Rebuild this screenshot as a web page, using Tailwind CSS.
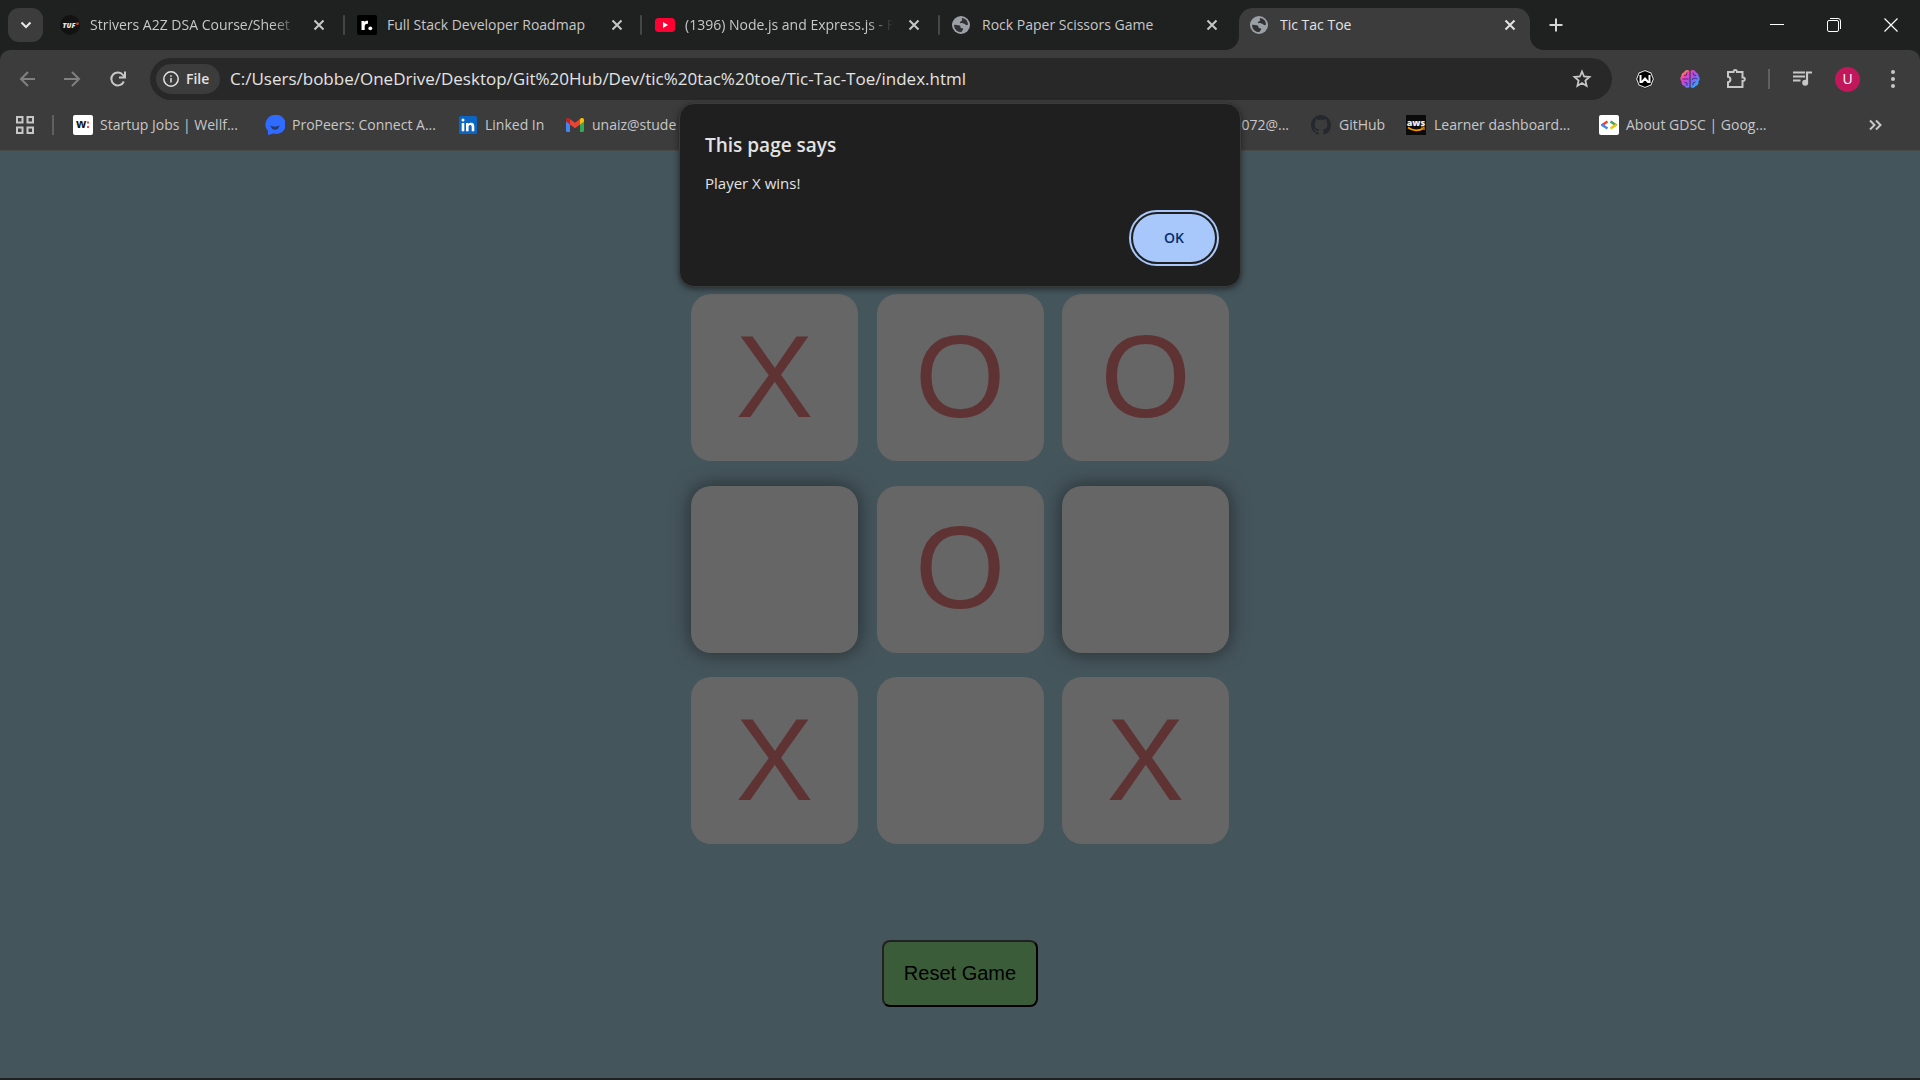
<!DOCTYPE html>
<html lang="en">
<head>
<meta charset="utf-8">
<title>Tic Tac Toe</title>
<script src="https://cdn.jsdelivr.net/npm/@tailwindcss/browser@4"></script>
</head>
<body class="min-h-screen flex flex-col bg-[#1f2020] font-['Open_Sans',sans-serif] text-[#c7c7c7] text-sm">
<svg class="hidden">
  <symbol id="x" viewBox="0 0 16 16"><path d="M3.500 3.500l9 9M12.500 3.500l-9 9" stroke="currentColor" stroke-width="2" fill="none"/></symbol>
  <symbol id="globe" viewBox="0 0 18 18"><circle cx="9" cy="9" r="9" fill="#9aa0a6"/><path d="M10 2a7 7 0 0 1 6 6.500c-1 .8-1.500.8-2.300.3-.7-.5-.8-1.300-2.300-1.300-1.200 0-1.400-.6-2.600-.4-.9.200-1.300-.5-.7-1.200.7-.8 1.700-.3 1.900-1.400.2-.9-.5-1.600 0-2.500z" fill="#303132"/><path d="M2 9c1.800-.6 3 .2 4.300.2 1.600 0 2.400.9 2.200 2-.1 1 .9.900 1.800 1 1.300.2 1 1.500.3 2.100-.8.6-.4 1.200-1.100 1.700A7 7 0 0 1 2 9z" fill="#303132"/></symbol>
</svg>

<!-- Tab strip -->
<header class="flex h-[50px] items-center pl-2 pr-[22px]">
  <button aria-label="Search tabs" class="flex h-[34px] w-[35px] shrink-0 items-center justify-center rounded-[11px] bg-[#3c3c3c]">
    <svg width="12" height="8" viewBox="0 0 12 8"><path d="M1.500 1.500L6 6l4.500-4.500" stroke="#e8e8e8" stroke-width="2" fill="none"/></svg>
  </button>
  <nav class="ml-1.5 flex h-full min-w-0 items-center">
    <div class="relative flex w-[298px] items-center pl-[11px]">
      <svg class="shrink-0" width="20" height="20" viewBox="0 0 20 20"><circle cx="10" cy="10" r="10" fill="#121212"/><text x="9" y="12.500" font-family="Open Sans" font-size="7" font-weight="800" font-style="italic" fill="#e8e8e8" text-anchor="middle">TUF</text><path d="M16.500 7.500H19l-.5 2.500h-2.300z" fill="#b5452f"/></svg>
      <a href="#" class="ml-2.5 w-[208px] overflow-hidden whitespace-nowrap [mask-image:linear-gradient(to_right,#000_88%,transparent)]">Strivers A2Z DSA Course/Sheet</a>
      <button aria-label="Close tab" class="ml-[13px]"><svg width="16" height="16"><use href="#x"/></svg></button>
      <span class="absolute right-0.5 h-5 w-0.5 rounded bg-[#444746]"></span>
    </div>
    <div class="relative flex w-[297px] items-center pl-2.5">
      <svg class="shrink-0" width="20" height="20" viewBox="0 0 20 20"><rect width="20" height="20" rx="2" fill="#000"/><path d="M4.500 15V6h3v1.200C8.300 6 9.400 5.600 11 5.800v3C8.700 8.600 7.700 9.500 7.700 11.300V15z" fill="#fff"/><circle cx="13.300" cy="13.300" r="1.900" fill="#fff"/></svg>
      <a href="#" class="ml-2.5 w-[208px] overflow-hidden whitespace-nowrap">Full Stack Developer Roadmap</a>
      <button aria-label="Close tab" class="ml-3.5"><svg width="16" height="16"><use href="#x"/></svg></button>
      <span class="absolute right-0.5 h-5 w-0.5 rounded bg-[#444746]"></span>
    </div>
    <div class="relative flex w-[298px] items-center pl-[11px]">
      <svg class="shrink-0" width="20" height="20" viewBox="0 0 20 20"><rect y="3" width="20" height="14" rx="3.500" fill="#ff0033"/><path d="M8 7l5 3-5 3z" fill="#fff"/></svg>
      <a href="#" class="ml-2.5 w-[208px] overflow-hidden whitespace-nowrap [mask-image:linear-gradient(to_right,#000_88%,transparent)]">(1396) Node.js and Express.js - F</a>
      <button aria-label="Close tab" class="ml-[13px]"><svg width="16" height="16"><use href="#x"/></svg></button>
      <span class="absolute right-0.5 h-5 w-0.5 rounded bg-[#444746]"></span>
    </div>
    <div class="flex w-[297px] items-center pl-2.5">
      <svg class="mr-0.5 shrink-0" width="18" height="18"><use href="#globe"/></svg>
      <a href="#" class="ml-2.5 w-[208px] overflow-hidden whitespace-nowrap">Rock Paper Scissors Game</a>
      <button aria-label="Close tab" class="ml-3.5"><svg width="16" height="16"><use href="#x"/></svg></button>
    </div>
    <div class="relative flex h-[42px] w-[291px] items-center self-end rounded-t-[14px] bg-[#3c3c3c] pb-2 pl-[11px] text-[#e3e3e3]">
      <svg class="absolute bottom-0 right-full" width="14" height="14"><path d="M14 0v14H0A14 14 0 0 0 14 0z" fill="#3c3c3c"/></svg>
      <svg class="absolute bottom-0 left-full" width="14" height="14"><path d="M0 0v14h14A14 14 0 0 1 0 0z" fill="#3c3c3c"/></svg>
      <svg class="mr-0.5 shrink-0" width="18" height="18"><use href="#globe"/></svg>
      <a href="#" class="ml-2.5 w-[208px] overflow-hidden whitespace-nowrap">Tic Tac Toe</a>
      <button aria-label="Close tab" class="ml-3.5"><svg width="16" height="16"><use href="#x"/></svg></button>
    </div>
    <button aria-label="New tab" class="ml-[18px]"><svg width="16" height="16"><path d="M8 1.500v13M1.500 8h13" stroke="#d5d5d5" stroke-width="2"/></svg></button>
  </nav>
  <div class="ml-auto flex items-center gap-[43px] text-white">
    <button aria-label="Minimize"><svg width="14" height="14"><path d="M0 6.500h14" stroke="currentColor"/></svg></button>
    <button aria-label="Restore"><svg width="14" height="14" fill="none" stroke="currentColor"><rect x=".5" y="2.500" width="11" height="11" rx="1.500"/><path d="M3 .5h8a2.500 2.500 0 0 1 2.500 2.500v8"/></svg></button>
    <button aria-label="Close"><svg width="14" height="14"><path d="M.5.5l13 13M13.500.5l-13 13" stroke="currentColor" stroke-width="1.200"/></svg></button>
  </div>
</header>

<!-- Toolbar and bookmarks -->
<section class="h-[101px] rounded-t-[10px] border-b border-[#4a4c4c] bg-[#3c3c3c] pt-2">
  <div class="flex h-[42px] items-center pr-[17px]">
    <div class="flex w-[150px] shrink-0 items-center gap-[25px] pl-[18px]">
      <button aria-label="Back"><svg width="20" height="20" fill="none" stroke="#808080" stroke-width="2"><path d="M17 10H3.500M10 3l-7 7 7 7"/></svg></button>
      <button aria-label="Forward"><svg width="20" height="20" fill="none" stroke="#808080" stroke-width="2"><path d="M1 10h14.500M9 3l7 7-7 7"/></svg></button>
      <button aria-label="Reload"><svg width="20" height="20" fill="none" stroke="#c7c7c7" stroke-width="2"><path d="M15.800 12.500a6.500 6.500 0 1 1-.8-6.500l1.500 2M17 2.500v6h-6"/></svg></button>
    </div>
    <div class="flex h-full min-w-0 flex-1 items-center rounded-full bg-[#282828] pl-1.5 pr-5">
      <button class="flex h-[30px] w-16 shrink-0 items-center gap-[7px] rounded-full bg-[#3c3c3c] pl-[7px] text-sm font-semibold text-[#e3e3e3]">
        <svg width="16" height="16" fill="none" stroke="currentColor" stroke-width="1.500"><circle cx="8" cy="8" r="7.200"/><path d="M8 7v4.500M8 4.200v1.600"/></svg>File</button>
      <input aria-label="Address" type="text" value="C:/Users/bobbe/OneDrive/Desktop/Git%20Hub/Dev/tic%20tac%20toe/Tic-Tac-Toe/index.html" class="ml-2.5 min-w-0 flex-1 bg-transparent text-[17px] text-[#e3e3e3] outline-none">
      <button aria-label="Bookmark this page"><svg width="20" height="20" fill="none" stroke="#c7c7c7" stroke-width="1.800"><path d="M10 2.500l2.100 5 5.400.5-4.100 3.600 1.200 5.300-4.600-2.800-4.600 2.800 1.200-5.300L2.500 8l5.400-.5z"/></svg></button>
    </div>
    <div class="ml-[23px] flex shrink-0 items-center">
      <button aria-label="Extension W"><svg width="20" height="20" viewBox="0 0 20 20"><path d="M10 .5l6.500 2.700L19.300 10l-2.800 6.700L10 19.500l-6.500-2.800L.7 10l2.800-6.800z" fill="#000"/><path d="M10 1.500l6 2.500 2.400 6L16 16l-6 2.500L4 16l-2.400-6L4 4z" fill="none" stroke="#ddd" stroke-width="1.100"/><path d="M5.500 6v7h1.500l3-3.500 3 3.500h1.500V6" fill="none" stroke="#fff" stroke-width="2"/></svg></button>
      <button aria-label="Brain extension" class="ml-[25px]"><svg width="20" height="20" viewBox="0 0 20 20"><defs><linearGradient id="br" x1="0" y1="0" x2="1" y2="1"><stop offset=".1" stop-color="#ff9a3c"/><stop offset=".3" stop-color="#f23cc0"/><stop offset=".58" stop-color="#8b5cf6"/><stop offset=".9" stop-color="#22b8ff"/></linearGradient></defs><path d="M9.400 2v16c-1.800 1.600-4.300.8-4.800-1C2.200 16.600 1 14.500 1.600 12.500 0 11 0 8.500 1.400 7.300 1.200 5 2.500 3.600 4 3.400 4.800.8 8.400.2 9.400 2zM10.600 2v16c1.800 1.600 4.300.8 4.800-1 2.400-.4 3.600-2.500 3-4.500 1.600-1.500 1.600-4 .2-5.200.2-2.300-1.100-3.700-2.600-3.900-.8-2.600-4.400-3.200-5.400-1.400z" fill="url(#br)"/><path d="M2.500 10h6M7 3.500L6.500 6l-2.500.5M7 16.500V14l-2.500-1M12 10.500l3-1.500 2.500 1M13 3.500L13.500 6l2.500.5M13 16.500V14l2.500-1" stroke="#3b2a6b" stroke-width=".9" fill="none"/></svg></button>
      <button aria-label="Extensions" class="ml-[25px]"><svg width="22" height="22" fill="none" stroke="#c7c7c7" stroke-width="2"><path d="M3 4h5.500V3.500a1.800 1.800 0 0 1 3.500 0V4h5.500v5.500h.5a1.800 1.800 0 0 1 0 3.600h-.5V19H3v-4.800c3.200-.6 3.200-4.800 0-5.400z"/></svg></button>
      <span class="ml-[21px] h-5 w-0.5 bg-[#5f6060]"></span>
      <button aria-label="Media controls" class="ml-[23px]"><svg width="20" height="20" viewBox="0 0 20 20"><path d="M0 3.500h12M0 7.500h12M0 11.500h7.500" stroke="#c7c7c7" stroke-width="2"/><path d="M14 13.500V3.500h5" stroke="#c7c7c7" stroke-width="2.200" fill="none"/><circle cx="12.200" cy="13.700" r="3" fill="#c7c7c7"/></svg></button>
      <button aria-label="Profile" class="ml-[22px] flex size-[25px] items-center justify-center rounded-full bg-[#c2185b] text-sm text-white">U</button>
      <button aria-label="Menu" class="ml-[23px]"><svg width="20" height="20" fill="#c7c7c7"><circle cx="10" cy="3" r="2"/><circle cx="10" cy="10" r="2"/><circle cx="10" cy="17" r="2"/></svg></button>
    </div>
  </div>
  <nav class="flex h-[50px] items-center whitespace-nowrap pl-4 pr-[38px]">
    <button aria-label="Apps" class="shrink-0"><svg width="18" height="18" fill="none" stroke="#c7c7c7" stroke-width="2"><path d="M1 1h5.500v5.500H1zM11.500 1H17v5.500h-5.500zM1 11.500h5.500V17H1zM11.500 11.500H17V17h-5.500z"/></svg></button>
    <span class="ml-[18px] h-5 w-0.5 shrink-0 bg-[#5f6060]"></span>
    <a href="#" class="ml-[19px] flex w-48 shrink-0 items-center gap-[7px]"><svg width="20" height="20"><rect width="20" height="20" rx="2" fill="#fff"/><text x="3" y="13" font-family="Open Sans" font-size="12" font-weight="700" fill="#111">w</text><path d="M14 6.500h2v2h-2zM14 11h2v2h-2z" fill="#e5484d"/></svg>Startup Jobs | Wellf...</a>
    <a href="#" class="flex w-[194px] shrink-0 items-center gap-[7px]"><svg width="20" height="20"><path d="M10 0a9.500 9.500 0 1 1-1.500 18.500L3 20v-4A9.500 9.500 0 0 1 10 0z" fill="#2f6bff"/><path d="M5.500 10.500c2.500 1.500 6.500 1.500 9 0-.5 2.800-2.300 4.200-4.500 4.200s-4-1.400-4.500-4.200z" fill="#263a6b"/></svg>ProPeers: Connect A...</a>
    <a href="#" class="flex w-[107px] shrink-0 items-center gap-2"><svg width="18" height="18"><rect width="18" height="18" rx="1.500" fill="#0a66c2"/><path d="M2.700 7h2.600v8.300H2.700zM7 7h2.500v1.200C10 7.300 11 6.800 12 6.800c2.600 0 3.300 1.600 3.300 4v4.500h-2.600v-4c0-1.200-.2-2.200-1.400-2.200S9.600 10 9.600 11.300v4H7z" fill="#fff"/><circle cx="4" cy="4" r="1.500" fill="#fff"/></svg>Linked In</a>
    <a href="#" class="flex w-[374px] shrink-0 items-center gap-2"><svg width="18" height="14" viewBox="0 0 18 14"><path d="M0 2v10.800C0 13.500.5 14 1.200 14H4V6z" fill="#4285f4"/><path d="M18 2v10.800c0 .7-.5 1.200-1.200 1.200H14V6z" fill="#34a853"/><path d="M14 1v5.500L18 3.500V2c0-2-2-2.600-3.300-1.600z" fill="#fbbc04"/><path d="M4 6.500V1l5 3.800L14 1v5.500l-5 3.800z" fill="#ea4335"/><path d="M0 2v1.500l4 3V1L3.300.4C2-.6 0 0 0 2z" fill="#c5221f"/></svg>unaiz@stude</a>
    <a href="#" class="flex w-[371px] shrink-0 items-center justify-end pr-[22px]">072@...</a>
    <a href="#" class="flex w-[95px] shrink-0 items-center gap-2"><svg width="20" height="20" viewBox="0 0 16 16"><path fill="#24292f" d="M8 0C3.580 0 0 3.580 0 8c0 3.540 2.290 6.530 5.470 7.590.4.070.55-.17.55-.38 0-.19-.01-.82-.01-1.490-2.010.37-2.530-.49-2.690-.94-.09-.23-.48-.94-.82-1.130-.28-.15-.68-.52-.01-.53.63-.01 1.080.58 1.230.82.72 1.210 1.870.87 2.330.66.070-.52.28-.87.51-1.070-1.780-.2-3.640-.89-3.640-3.950 0-.87.31-1.590.82-2.150-.08-.2-.36-1.020.08-2.120 0 0 .67-.21 2.200.82.64-.18 1.320-.27 2-.27s1.360.09 2 .27c1.530-1.040 2.200-.82 2.200-.82.44 1.100.16 1.920.08 2.120.51.56.82 1.270.82 2.150 0 3.070-1.870 3.750-3.650 3.950.29.25.54.73.54 1.480 0 1.070-.01 1.930-.01 2.200 0 .21.15.46.55.38A8.010 8.010 0 0 0 16 8c0-4.420-3.580-8-8-8z"/></svg>GitHub</a>
    <a href="#" class="flex w-[193px] shrink-0 items-center gap-2"><svg width="20" height="20"><rect width="20" height="20" fill="#0b0b0b"/><text x="10" y="10.500" font-family="Open Sans" font-size="9" font-weight="800" fill="#eee" text-anchor="middle">aws</text><path d="M2 12.500c5 3.600 11 3.600 15 1" stroke="#ff9900" stroke-width="1.800" fill="none"/><path d="M15 12h3v3" stroke="#ff9900" stroke-width="1.200" fill="none"/></svg>Learner dashboard...</a>
    <a href="#" class="flex shrink-0 items-center gap-[7px]"><svg width="20" height="20" fill="none" stroke-width="2.400"><rect width="20" height="20" rx="2" fill="#fff"/><path d="M2.500 10.500l6-4" stroke="#ea4335"/><path d="M2.500 9.500l6 4" stroke="#4285f4"/><path d="M11.500 6.500l6 4" stroke="#34a853"/><path d="M17.500 9.500l-6 4" stroke="#fbbc04"/></svg>About GDSC | Goog...</a>
    <button aria-label="More bookmarks" class="ml-auto"><svg width="14" height="12" fill="none" stroke="#c7c7c7" stroke-width="2"><path d="M2 1.500L6.500 6 2 10.500M8 1.500L12.500 6 8 10.500"/></svg></button>
  </nav>
</section>

<!-- Game page -->
<main class="mb-0.5 flex flex-1 flex-col items-center bg-[#45555c] pt-[143px] font-['Liberation_Sans',sans-serif]">
  <div class="grid h-[550px] w-[538px] grid-cols-[repeat(3,167px)] content-between justify-between text-[116px] text-[#5f3333]">
    <button class="h-[167px] rounded-[20px] bg-[#666666] pb-0.5 leading-none">X</button>
    <button class="h-[167px] rounded-[20px] bg-[#666666] pb-0.5 leading-none">O</button>
    <button class="h-[167px] rounded-[20px] bg-[#666666] pb-0.5 leading-none">O</button>
    <button aria-label="Empty" class="h-[167px] rounded-[20px] bg-[#666666] shadow-[0_0_20px_rgba(0,0,0,0.5)]"></button>
    <button class="h-[167px] rounded-[20px] bg-[#666666] pb-0.5 leading-none">O</button>
    <button aria-label="Empty" class="h-[167px] rounded-[20px] bg-[#666666] shadow-[0_0_20px_rgba(0,0,0,0.5)]"></button>
    <button class="h-[167px] rounded-[20px] bg-[#666666] pb-0.5 leading-none">X</button>
    <button aria-label="Empty" class="h-[167px] rounded-[20px] bg-[#666666]"></button>
    <button class="h-[167px] rounded-[20px] bg-[#666666] pb-0.5 leading-none">X</button>
  </div>
  <button class="mt-24 h-[67px] w-[156px] rounded-lg border-2 border-b-black border-l-[#222] border-r-black border-t-[#222] bg-[#3b5c38] pb-0.5 text-xl text-black">Reset Game</button>
</main>

<!-- Alert -->
<div role="alertdialog" aria-labelledby="alert-title" class="absolute left-1/2 top-[103px] flex h-[184px] w-[562px] -translate-x-1/2 flex-col rounded-[15px] border border-[#3a3b3b] bg-[#1f1f1f] px-[25px] pt-[25px] text-[#e3e3e3] shadow-[0_2px_6px_rgba(0,0,0,0.5)]">
  <h1 id="alert-title" class="text-[19px] font-semibold leading-8">This page says</h1>
  <p class="mt-3 text-[15px] leading-5">Player X wins!</p>
  <button class="mt-[21px] h-12 w-[82px] self-end rounded-full bg-[#a8c7fa] text-sm font-semibold text-[#062e6f] outline-2 outline-offset-2 outline-[#a8c7fa]">OK</button>
</div>
</body>
</html>
